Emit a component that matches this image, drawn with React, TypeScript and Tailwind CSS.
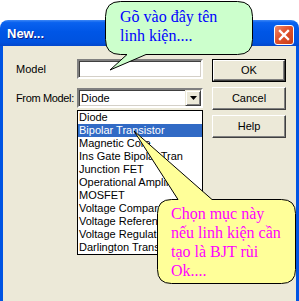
const items = [
  "Diode",
  "Bipolar Transistor",
  "Magnetic Core",
  "Ins Gate Bipolar Tran",
  "Junction FET",
  "Operational Amplifier",
  "MOSFET",
  "Voltage Comparator",
  "Voltage Reference",
  "Voltage Regulator",
  "Darlington Transistor",
];

const sunken =
  "shrink-0 border-2 border-t-[#808080] border-l-[#808080] border-b-white border-r-white bg-white shadow-[inset_1px_1px_0_#404040,inset_-1px_-1px_0_#d4d0c8]";

function Button({ label, primary }: { label: string; primary?: boolean }) {
  const inner = (
    <div className="flex h-full w-full items-center justify-center border border-t-white border-l-white border-r-[#404040] border-b-[#404040] bg-[#ece9d8] text-[11px] text-black shadow-[inset_-1px_-1px_0_#808080]">
      {label}
    </div>
  );
  return primary ? (
    <div className="h-[23px] w-[74px] border border-black">{inner}</div>
  ) : (
    <div className="h-[23px] w-[74px]">{inner}</div>
  );
}

export default function App() {
  return (
    <div className="relative h-[301px] w-[299px] overflow-hidden bg-white font-['Liberation_Sans',Arial,sans-serif]">
      {/* Window */}
      <div className="mt-5 w-[299px]">
        {/* Title bar */}
        <div className="flex h-[26px] items-start justify-between rounded-t-[8px] bg-[linear-gradient(to_bottom,#3d87f5_0%,#0a62ef_10%,#0056e6_45%,#0052df_85%,#0347cc_100%)] pl-[7px] pr-[5px]">
          <span className="mt-[6px] text-[13px] font-bold leading-[15px] text-white [text-shadow:1px_1px_0_#0a1e8c]">
            New...
          </span>
          <div className="mt-[5px] flex h-[20px] w-[20px] items-center justify-center rounded-[3px] border border-white bg-[linear-gradient(135deg,#f08a6c_0%,#e0522c_45%,#c93c16_100%)]">
            <svg width="12" height="12" viewBox="0 0 12 12">
              <path d="M2 2 L10 10 M10 2 L2 10" stroke="white" strokeWidth="2.4" strokeLinecap="square" />
            </svg>
          </div>
        </div>

        {/* Body */}
        <div className="flex h-[255px] border-x-[3px] border-[#0054e3] bg-[#ece9d8] pl-[13px] pt-[13px]">
          <div className="flex w-[187px] shrink-0 flex-col">
            <div className="flex items-center">
              <span className="w-[61px] shrink-0 whitespace-nowrap text-[11px] text-black">Model</span>
              <div className={`h-[20px] w-[126px] ${sunken}`} />
            </div>
            <div className="relative mt-[9px] flex items-center">
              <span className="w-[61px] shrink-0 whitespace-nowrap text-[11px] tracking-[-0.35px] text-black">
                From Model:
              </span>
              <div className={`flex h-[20px] w-[126px] items-center ${sunken}`}>
                <span className="flex-1 pl-[2px] text-[11px] text-black">Diode</span>
                <div className="flex h-[16px] w-[16px] items-center justify-center border border-t-[#ece9d8] border-l-[#ece9d8] border-r-[#404040] border-b-[#404040] bg-[#ece9d8] shadow-[inset_1px_1px_0_#fff,inset_-1px_-1px_0_#808080]">
                  <svg width="7" height="4" viewBox="0 0 7 4">
                    <path d="M0 0 H7 L3.5 4 Z" fill="black" />
                  </svg>
                </div>
              </div>
              {/* Open list */}
              <div className="absolute left-[61px] top-[22px] w-[126px] border border-black bg-white">
                {items.map((it, i) => (
                  <div
                    key={it}
                    className={`h-[13px] overflow-hidden whitespace-nowrap pl-[1px] text-[11px] leading-[13px] ${
                      i === 1 ? "bg-[#316ac5] text-white" : "text-black"
                    }`}
                  >
                    {it}
                  </div>
                ))}
              </div>
            </div>
          </div>
          <div className="ml-[9px] flex flex-col gap-[5px]">
            <Button label="OK" primary />
            <Button label="Cancel" />
            <Button label="Help" />
          </div>
        </div>
      </div>

      {/* Callouts */}
      <svg className="pointer-events-none absolute left-0 top-0" width="299" height="301">
        <path
          d="M120.5 1.5 H237.5 Q252.5 1.5 252.5 16.5 V39.5 Q252.5 54.5 237.5 54.5 H146 L110 70 L127 54.5 H120.5 Q105.5 54.5 105.5 39.5 V16.5 Q105.5 1.5 120.5 1.5 Z"
          fill="#ccffcc"
          stroke="black"
          strokeWidth="1"
        />
        <path
          d="M171.5 199.5 H178 L134 131 L212 199.5 H281.5 Q295.5 199.5 295.5 213.5 V269.5 Q295.5 283.5 281.5 283.5 H171.5 Q157.5 283.5 157.5 269.5 V213.5 Q157.5 199.5 171.5 199.5 Z"
          fill="#ffff99"
          stroke="black"
          strokeWidth="1"
        />
      </svg>
      <div className="absolute left-[120px] top-[7px] font-['Liberation_Serif','Times_New_Roman',serif] text-[16px] leading-[19px] text-[#0000ff]">
        <div>Gõ vào đây tên</div>
        <div>linh kiện....</div>
      </div>
      <div className="absolute left-[171px] top-[204px] font-['Liberation_Serif','Times_New_Roman',serif] text-[16px] leading-[19px] text-[#ff00ff]">
        <div>Chọn mục này</div>
        <div>nếu linh kiện cần</div>
        <div>tạo là BJT rùi</div>
        <div>Ok....</div>
      </div>
    </div>
  );
}
